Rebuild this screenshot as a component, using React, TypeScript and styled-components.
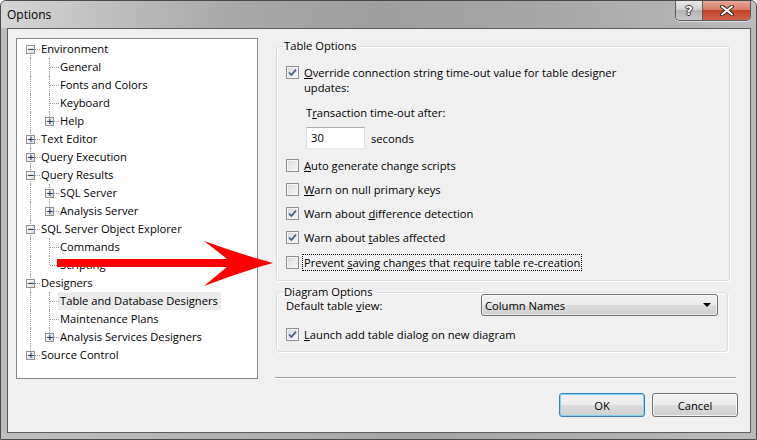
import React from 'react'
import styled, { createGlobalStyle, css } from 'styled-components'

const GlobalStyle = createGlobalStyle`
html, body {
  margin: 0;
  padding: 0;
  background: #ffffff;
}
body {
  font-family: "Open Sans", "Noto Sans", "Liberation Sans", sans-serif;
  font-size: 11.2px;
  color: #000;
}
`

type TreeNode = {
    label: string
    kids?: TreeNode[]
    open?: boolean
    closed?: boolean
    selected?: boolean
}

const tree: TreeNode[] = [
    {
        label: 'Environment', open: true, kids: [
            { label: 'General' },
            { label: 'Fonts and Colors' },
            { label: 'Keyboard' },
            { label: 'Help', closed: true },
        ]
    },
    { label: 'Text Editor', closed: true },
    { label: 'Query Execution', closed: true },
    {
        label: 'Query Results', open: true, kids: [
            { label: 'SQL Server', closed: true },
            { label: 'Analysis Server', closed: true },
        ]
    },
    {
        label: 'SQL Server Object Explorer', open: true, kids: [
            { label: 'Commands' },
            { label: 'Scripting' },
        ]
    },
    {
        label: 'Designers', open: true, kids: [
            { label: 'Table and Database Designers', selected: true },
            { label: 'Maintenance Plans' },
            { label: 'Analysis Services Designers', closed: true },
        ]
    },
    { label: 'Source Control', closed: true },
]

type LineKind = 'none' | 'full' | 'top' | 'bottom'

type FlatRow = {
    node: TreeNode
    guides: boolean[]
    line: LineKind
}

// walk the tree and work out which connector each row needs
const flatten = (nodes: TreeNode[], guides: boolean[], out: FlatRow[]) => {
    nodes.forEach((node, i) => {
        const last = i === nodes.length - 1
        const first = i === 0 && guides.length === 0
        let line: LineKind = last ? 'top' : 'full'
        if (first && !last) line = 'bottom'
        out.push({ node, guides, line })
        if (node.kids && node.open) flatten(node.kids, [...guides, !last], out)
    })
    return out
}

const rows = flatten(tree, [], [])

const CheckMark = () => (
    <svg width="9" height="9" viewBox="0 0 9 9">
        <path d="M1 4.5 L3.4 7 L8 1.6" fill="none" stroke="#4a5d8f" strokeWidth="1.8" />
    </svg>
)

const Check = ({ checked }: { checked?: boolean }) => (
    <CheckBox>{checked && <CheckMark />}</CheckBox>
)

const Arrow = () => (
    <ArrowSvg width="757" height="440" viewBox="0 0 757 440">
        <path
            d="M57 259 L227 259 Q216 250 204 241 Q240 254 273 263 Q240 272 204 286 Q216 276 227 267 L57 267 Z"
            fill="#ff0000"
        />
    </ArrowSvg>
)

const App = () => {
    return (
        <>
            <GlobalStyle />
            <Window>
                <TitleBar>
                    <Title>Options</Title>
                    <Caption>
                        <HelpButton>?</HelpButton>
                        <CloseButton>
                            <svg width="14" height="11" viewBox="0 0 14 11">
                                <path d="M2 1.5 L12 9.5 M12 1.5 L2 9.5" stroke="#3a2a28" strokeWidth="4" strokeLinecap="round" />
                                <path d="M2 1.5 L12 9.5 M12 1.5 L2 9.5" stroke="#ffffff" strokeWidth="2" strokeLinecap="round" />
                            </svg>
                        </CloseButton>
                    </Caption>
                </TitleBar>

                <Client>
                    <Body>
                        <Tree>
                            {rows.map((r, i) => (
                                <TreeRow key={i}>
                                    {r.guides.map((g, j) => (
                                        <Cell key={j} $line={g ? 'full' : 'none'} />
                                    ))}
                                    <Cell $line={r.line} $branch>
                                        {(r.node.open || r.node.closed) && (
                                            <Expander>{r.node.open ? '−' : '+'}</Expander>
                                        )}
                                    </Cell>
                                    <NodeLabel $selected={r.node.selected}>{r.node.label}</NodeLabel>
                                </TreeRow>
                            ))}
                        </Tree>

                        <RightPane>
                            <Group $width={454} $bottom={9}>
                                <Legend>Table Options</Legend>
                                <CheckRow $top={10} $wrap>
                                    <Check checked />
                                    <CheckText>
                                        <u>O</u>verride connection string time-out value for table designer<br />
                                        updates:
                                    </CheckText>
                                </CheckRow>
                                <SubLabel>
                                    T<u>r</u>ansaction time-out after:
                                </SubLabel>
                                <InputRow>
                                    <TextBox>30</TextBox>
                                    <span>seconds</span>
                                </InputRow>
                                <CheckRow $top={7.5}>
                                    <Check />
                                    <CheckText><u>A</u>uto generate change scripts</CheckText>
                                </CheckRow>
                                <CheckRow>
                                    <Check />
                                    <CheckText><u>W</u>arn on null primary keys</CheckText>
                                </CheckRow>
                                <CheckRow $top={7}>
                                    <Check checked />
                                    <CheckText>Warn about <u>d</u>ifference detection</CheckText>
                                </CheckRow>
                                <CheckRow $top={7}>
                                    <Check checked />
                                    <CheckText>Warn about <u>t</u>ables affected</CheckText>
                                </CheckRow>
                                <CheckRow $top={8}>
                                    <Check />
                                    <CheckText $focus>Prevent <u>s</u>aving changes that require table re-creation</CheckText>
                                </CheckRow>
                            </Group>

                            <Group $width={452} $top={3} $bottom={8.5}>
                                <Legend>Diagram Options</Legend>
                                <ComboRow>
                                    <FieldLabel>Default table <u>v</u>iew:</FieldLabel>
                                    <Combo>
                                        <span>Column Names</span>
                                        <DropArrow />
                                    </Combo>
                                </ComboRow>
                                <CheckRow $top={9.5}>
                                    <Check checked />
                                    <CheckText><u>L</u>aunch add table dialog on new diagram</CheckText>
                                </CheckRow>
                            </Group>

                            <Separator />
                        </RightPane>
                    </Body>

                    <Buttons>
                        <Button $default>OK</Button>
                        <Button>Cancel</Button>
                    </Buttons>
                </Client>

                <Arrow />
            </Window>
        </>
    )
}

export default App

const Window = styled.div`
position: relative;
width: 757px;
height: 440px;
box-sizing: border-box;
border: 1px solid #4a4a4a;
border-radius: 6px 6px 0 0;
background: linear-gradient(90deg, #bdbdbd 0%, #b2b2b2 30%, #a4a4a4 55%, #b0b0b0 80%, #bababa 100%);
display: flex;
flex-direction: column;
overflow: hidden;
`

const TitleBar = styled.div`
height: 27px;
flex: none;
display: flex;
align-items: flex-start;
padding: 0 5px 0 6px;
background: linear-gradient(90deg, #d6d6d6 0%, #c2c2c2 12%, #a9a9a9 30%, #9e9e9e 50%, #a6a6a6 70%, #b3b3b3 90%, #bcbcbc 100%);
`

const Title = styled.div`
font-size: 12px;
line-height: 16px;
margin-top: 6px;
color: #000;
`

const Caption = styled.div`
margin-left: auto;
display: flex;
height: 19px;
border: 1px solid #5a5a5a;
border-top: none;
border-radius: 0 0 5px 5px;
overflow: hidden;
box-shadow: 0 1px 0 rgba(255, 255, 255, 0.6);
`

const HelpButton = styled.div`
width: 26px;
display: flex;
align-items: center;
justify-content: center;
font-family: "DejaVu Sans", sans-serif;
font-weight: bold;
font-size: 13px;
color: #fff;
text-shadow: 0 0 1px #333, 0 0 1px #333, 1px 0 0 #444, -1px 0 0 #444, 0 1px 0 #444, 0 -1px 0 #444;
background: linear-gradient(#e8e8e8 0%, #d2d2d2 45%, #b4b4b4 50%, #c8c8c8 100%);
border-right: 1px solid #5a5a5a;
`

const CloseButton = styled.div`
width: 47px;
display: flex;
align-items: center;
justify-content: center;
background: linear-gradient(#e8a898 0%, #d97d66 45%, #c4442a 50%, #d2604a 100%);
`

const Client = styled.div`
flex: none;
height: 405px;
margin: 0 5px 0 6px;
box-sizing: border-box;
border: 1px solid #5c5c5c;
background: #f0f0f0;
padding: 9px 12px 0 8px;
display: flex;
flex-direction: column;
`

const Body = styled.div`
display: flex;
gap: 17px;
height: 341px;
`

const Tree = styled.div`
width: 242px;
height: 341px;
box-sizing: border-box;
flex: none;
background: #fff;
border: 1px solid #828790;
padding: 1px 0 0 4px;
`

const TreeRow = styled.div`
display: flex;
height: 18px;
align-items: center;
`

const Cell = styled.span<{ $line: LineKind; $branch?: boolean }>`
position: relative;
flex: none;
width: 19px;
height: 18px;

&::before {
  content: '';
  position: absolute;
  left: 9px;
  border-left: 1px dotted #a0a0a0;
  display: ${p => (p.$line === 'none' ? 'none' : 'block')};
  top: ${p => (p.$line === 'bottom' ? '9px' : '0')};
  bottom: ${p => (p.$line === 'top' ? '9px' : '0')};
}

${p => p.$branch && css`
  &::after {
    content: '';
    position: absolute;
    left: 10px;
    right: 0;
    top: 9px;
    border-top: 1px dotted #a0a0a0;
  }
`}
`

const Expander = styled.span`
position: absolute;
z-index: 1;
left: 5px;
top: 5px;
width: 9px;
height: 9px;
box-sizing: border-box;
border: 1px solid #919191;
background: linear-gradient(135deg, #ffffff 0%, #f0f0f0 50%, #d6d6d6 100%);
font-family: "DejaVu Sans", sans-serif;
font-size: 9px;
line-height: 7px;
text-align: center;
color: #1e395b;
font-weight: bold;
`

const NodeLabel = styled.span<{ $selected?: boolean }>`
line-height: 18px;
padding: 0 3px 0 2px;
margin-left: -1px;
white-space: nowrap;
background: ${p => (p.$selected ? '#ebebeb' : 'transparent')};
`

const RightPane = styled.div`
flex: 1;
display: flex;
flex-direction: column;
`

const Group = styled.fieldset<{ $width: number; $top?: number; $bottom?: number }>`
margin: ${p => p.$top ?? 0}px 0 0 1px;
width: ${p => p.$width}px;
box-sizing: border-box;
min-inline-size: 0;
padding: 0 9px ${p => p.$bottom ?? 8}px 9px;
border: 1px solid #d5dfe5;
border-radius: 3px;
box-shadow: inset 1px 1px 0 #ffffff, 1px 1px 0 #ffffff;
`

const Legend = styled.legend`
padding: 0 1px;
margin-left: -3px;
line-height: 16px;
`

const CheckRow = styled.div<{ $top?: number; $wrap?: boolean }>`
display: flex;
align-items: ${p => (p.$wrap ? 'flex-start' : 'center')};
gap: 3px;
margin-top: ${p => p.$top ?? 7.5}px;

${p => p.$wrap && css`
  & > span:first-child {
    margin-top: 2px;
  }
`}
`

const CheckBox = styled.span`
flex: none;
width: 13px;
height: 13px;
box-sizing: border-box;
border: 1px solid #8e8f8f;
background: linear-gradient(135deg, #d6d6d6 0%, #e8e8e8 45%, #f7f7f7 100%);
box-shadow: inset 0 0 0 1px #f4f4f4;
display: flex;
align-items: center;
justify-content: center;
`

const CheckText = styled.span<{ $focus?: boolean }>`
line-height: 15px;
padding: 0 1px;
border: 1px dotted ${p => (p.$focus ? '#000' : 'transparent')};
white-space: nowrap;
`

const SubLabel = styled.div`
line-height: 15px;
margin: 9px 0 0 20px;
`

const InputRow = styled.div`
display: flex;
align-items: center;
gap: 6px;
margin: 7px 0 0 20px;
`

const TextBox = styled.div`
width: 59px;
height: 22px;
box-sizing: border-box;
background: #fff;
border: 1px solid #dbdfe6;
border-top-color: #abadb3;
border-bottom-color: #e3e9ef;
padding-left: 4px;
line-height: 20px;
`

const ComboRow = styled.div`
display: flex;
align-items: center;
margin-top: -6px;
`

const FieldLabel = styled.span`
width: 195px;
flex: none;
line-height: 15px;
`

const Combo = styled.div`
width: 238px;
height: 22px;
box-sizing: border-box;
border: 1px solid #707070;
border-radius: 3px;
background: linear-gradient(#f2f2f2 0%, #ebebeb 50%, #dddddd 50%, #cfcfcf 100%);
box-shadow: inset 0 0 0 1px rgba(255, 255, 255, 0.6);
display: flex;
align-items: center;
padding: 0 6px 0 3px;
`

const DropArrow = styled.span`
margin-left: auto;
width: 0;
height: 0;
border-left: 4px solid transparent;
border-right: 4px solid transparent;
border-top: 4px solid #000;
`

const Separator = styled.div`
margin-top: auto;
margin-right: 2px;
border-top: 1px solid #a0a0a0;
border-bottom: 1px solid #ffffff;
`

const Buttons = styled.div`
display: flex;
justify-content: flex-end;
gap: 7px;
margin-top: 14px;
`

const Button = styled.button<{ $default?: boolean }>`
width: 86px;
height: 24px;
font: inherit;
color: #000;
padding: 0;
border-radius: 3px;
border: 1px solid ${p => (p.$default ? '#3c7fb1' : '#707070')};
background: linear-gradient(#f2f2f2 0%, #ebebeb 50%, #dddddd 50%, #cfcfcf 100%);
box-shadow: inset 0 0 0 1px ${p => (p.$default ? '#7fd3f1' : 'rgba(255, 255, 255, 0.7)')};
`

const ArrowSvg = styled.svg`
position: absolute;
left: -1px;
top: -1px;
pointer-events: none;
`
